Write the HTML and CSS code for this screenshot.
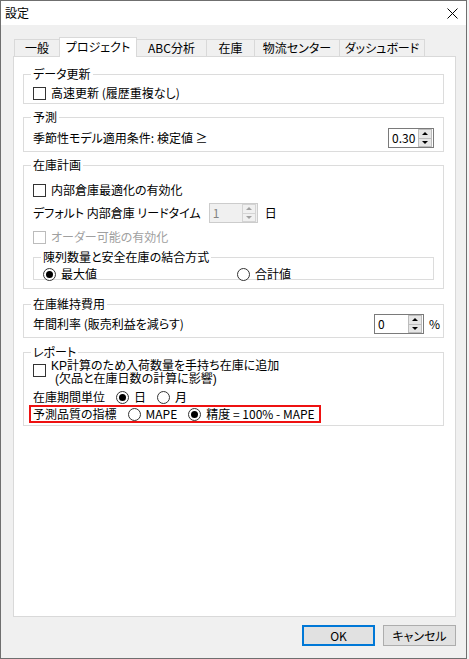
FILE: index.html
```html
<!DOCTYPE html>
<html lang="ja">
<head>
<meta charset="utf-8">
<title>設定</title>
<link rel="stylesheet" href="styles.css">
</head>
<body>
<div class="window">
  <div class="titlebar">
    <span class="title">設定</span>
    <svg class="close" width="11" height="11" viewBox="0 0 11 11"><path d="M0.5 0.5 L10.5 10.5 M10.5 0.5 L0.5 10.5" stroke="#000" stroke-width="1" fill="none"/></svg>
  </div>
  <div class="tabs">
    <div class="tab tab-general">一般</div>
    <div class="tab tab-project active">プロジェクト</div>
    <div class="tab tab-abc">ABC分析</div>
    <div class="tab tab-stock">在庫</div>
    <div class="tab tab-dist">物流センター</div>
    <div class="tab tab-dash">ダッシュボード</div>
  </div>
  <div class="panel">
    <div class="group g1">
      <div class="legend">データ更新</div>
      <div class="row row-g1"><span class="check"></span><span class="lbl">高速更新 (履歴重複なし)</span></div>
    </div>

    <div class="group g2">
      <div class="legend">予測</div>
      <div class="row row-spin row-g2">
        <span>季節性モデル適用条件: 検定値 ≥</span>
        <div class="spinner sp-season">
          <span class="val">0.30</span>
          <div class="spin-btns"><span class="spin-btn up"></span><span class="spin-btn down"></span></div>
        </div>
      </div>
    </div>

    <div class="group g3">
      <div class="legend">在庫計画</div>
      <div class="row row-g3a"><span class="check"></span><span class="lbl">内部倉庫最適化の有効化</span></div>
      <div class="row row-g3b">
        <span>デフォルト 内部倉庫 リードタイム</span>
        <div class="spinner sp-lead disabled">
          <span class="val">1</span>
          <div class="spin-btns"><span class="spin-btn up"></span><span class="spin-btn down"></span></div>
        </div>
        <span class="unit-day">日</span>
      </div>
      <div class="row row-g3c disabled-text"><span class="check disabled"></span><span class="lbl">オーダー可能の有効化</span></div>
      <div class="group inner">
        <div class="legend">陳列数量と安全在庫の結合方式</div>
        <div class="radio-grid">
          <div class="radio-item"><span class="radio checked"></span><span>最大値</span></div>
          <div class="radio-item"><span class="radio"></span><span>合計値</span></div>
        </div>
      </div>
    </div>

    <div class="group g4">
      <div class="legend">在庫維持費用</div>
      <div class="row row-spin row-g4">
        <span>年間利率 (販売利益を減らす)</span>
        <div class="spin-group">
          <div class="spinner sp-rate">
            <span class="val">0</span>
            <div class="spin-btns"><span class="spin-btn up"></span><span class="spin-btn down"></span></div>
          </div>
          <span class="pct">%</span>
        </div>
      </div>
    </div>

    <div class="group g5">
      <div class="legend">レポート</div>
      <div class="row-multi">
        <span class="check"></span>
        <div class="multi-text">
          <div>KP計算のため入荷数量を手持ち在庫に追加</div>
          <div class="indent">(欠品と在庫日数の計算に影響)</div>
        </div>
      </div>
      <div class="row row-unit">
        <span>在庫期間単位</span>
        <div class="radio-item gap"><span class="radio checked"></span><span>日</span></div>
        <div class="radio-item gap"><span class="radio"></span><span>月</span></div>
      </div>
      <div class="highlight">
        <span>予測品質の指標</span>
        <div class="radio-item gap"><span class="radio"></span><span>MAPE</span></div>
        <div class="radio-item gap"><span class="radio checked"></span><span>精度 = 100% - MAPE</span></div>
      </div>
    </div>
  </div>
  <div class="btn-row">
    <button class="btn default">OK</button>
    <button class="btn">キャンセル</button>
  </div>
</div>
</body>
</html>
```

FILE: styles.css
```css
* { box-sizing: border-box; }

body {
  margin: 0;
  background: #f4f4f4;
  font-family: "Noto Sans CJK JP", "Noto Sans", sans-serif;
  font-size: 12px;
  line-height: 16px;
  font-feature-settings: "palt";
  color: #000;
}

.window {
  width: 467px;
  height: 659px;
  border: 1px solid #6f6f6f;
  background: #f0f0f0;
  display: flex;
  flex-direction: column;
}

.titlebar {
  height: 24px;
  flex: none;
  background: #fff;
  display: flex;
  align-items: center;
  justify-content: space-between;
  padding: 0 8px 0 4px;
}

.close { display: block; margin-top: 1px; }

/* tabs */
.tabs {
  display: flex;
  align-items: flex-end;
  height: 19px;
  flex: none;
  margin: 12px 0 0 13px;
}

.tab {
  height: 17px;
  border: 1px solid #d9d9d9;
  border-bottom: none;
  margin-left: -1px;
  text-align: center;
  line-height: 16px;
  background: #f0f0f0;
}
.tab:first-child { margin-left: 0; }

.tab.active {
  height: 20px;
  line-height: 17px;
  background: #fff;
  margin-bottom: -1px;
  position: relative;
  z-index: 1;
}

.tab-general { width: 46px; }
.tab-project { width: 78px; }
.tab-abc { width: 71px; }
.tab-stock { width: 49px; }
.tab-dist { width: 86px; }
.tab-dash { width: 86px; }

/* panel */
.panel {
  flex: none;
  margin-left: 12px;
  width: 443px;
  height: 561px;
  border: 1px solid #d9d9d9;
  background: #fff;
  padding: 17px 11px 0 9px;
}

.group {
  border: 1px solid #dcdcdc;
  padding: 0 9px;
}

.legend {
  margin: -9px 0 0 -2px;
  padding: 0 2px;
  background: #fff;
  width: fit-content;
  height: 16px;
  line-height: 16px;
  white-space: nowrap;
}

.g1 { padding-bottom: 2px; }
.g2 { margin-top: 13px; padding-bottom: 3px; }
.g3 { margin-top: 13px; padding-bottom: 8px; }
.g4 { margin-top: 15px; padding-bottom: 3px; }
.g5 { margin-top: 14px; padding-bottom: 2px; }

.row {
  display: flex;
  align-items: center;
  white-space: nowrap;
}

.row-g1 { margin-top: 3px; height: 16px; }
.row-g2 { margin-top: 3px; height: 20px; justify-content: space-between; }
.row-g3a { margin-top: 9px; height: 16px; }
.row-g3b { margin-top: 5px; height: 20px; }
.row-g3c { margin-top: 6px; height: 16px; }
.row-g4 { margin-top: 2px; height: 20px; justify-content: space-between; }

.lbl { margin-left: 5px; }

.check {
  width: 13px;
  height: 13px;
  flex: none;
  border: 1px solid #333;
  background: #fff;
}
.check.disabled { border-color: #bcbcbc; }
.disabled-text { color: #a0a0a0; }

/* inner group */
.inner {
  margin-top: 12px;
  padding: 0 9px;
}
.radio-grid {
  margin-top: 1px;
  height: 13px;
  display: grid;
  grid-template-columns: 194px 1fr;
  align-items: center;
}

.radio-item {
  display: flex;
  align-items: center;
  gap: 5px;
  white-space: nowrap;
}
.radio-item.gap { margin-left: 11px; }

.radio {
  width: 13px;
  height: 13px;
  flex: none;
  border: 1px solid #333;
  border-radius: 50%;
  background: #fff;
  display: flex;
  align-items: center;
  justify-content: center;
}
.radio.checked::after {
  content: "";
  width: 7px;
  height: 7px;
  border-radius: 50%;
  background: #000;
}

/* spinners */
.spinner {
  height: 20px;
  border: 1px solid #7a7a7a;
  background: #fff;
  display: flex;
  align-items: stretch;
  flex: none;
}
.spinner .val {
  flex: 1;
  padding-left: 3px;
  line-height: 18px;
}
.spin-btns {
  width: 14px;
  margin-right: 1px;
  display: flex;
  flex-direction: column;
}
.spin-btn {
  flex: 1;
  background: #e6e6e6;
  border: 1px solid #bcbcbc;
  display: flex;
  align-items: center;
  justify-content: center;
}
.spin-btn.down { border-top: none; }
.spin-btn.up::after {
  content: "";
  border-left: 3px solid transparent;
  border-right: 3px solid transparent;
  border-bottom: 3px solid #000;
}
.spin-btn.down::after {
  content: "";
  border-left: 3px solid transparent;
  border-right: 3px solid transparent;
  border-top: 3px solid #000;
}

.sp-season { width: 46px; }
.sp-lead { width: 49px; margin-left: 8px; }
.sp-rate { width: 50px; }

.spinner.disabled {
  border-color: #cccccc;
  background: #f0f0f0;
  color: #838383;
}
.spinner.disabled .spin-btn {
  background: #f0f0f0;
  border-color: #d4d4d4;
}
.spinner.disabled .spin-btn.up::after { border-bottom-color: #a0a0a0; }
.spinner.disabled .spin-btn.down::after { border-top-color: #a0a0a0; }

.unit-day { margin-left: 7px; }

.spin-group {
  display: flex;
  align-items: center;
  margin-right: -6px;
}
.pct { margin-left: 5px; }

/* report */
.row-multi {
  display: flex;
  align-items: flex-start;
  white-space: nowrap;
}
.row-multi .check { margin-top: 4px; }
.multi-text {
  margin-left: 5px;
  font-family: "Liberation Sans", "Noto Sans CJK JP", sans-serif;
  line-height: 13px;
}
.indent { padding-left: 4px; }

.row-unit { margin-top: 3px; height: 16px; }

.highlight {
  display: flex;
  align-items: center;
  width: fit-content;
  height: 18px;
  margin-left: -4px;
  padding: 0 4px 0 2px;
  border: 2px solid #ee1111;
  white-space: nowrap;
}

/* buttons */
.btn-row {
  display: flex;
  justify-content: flex-end;
  gap: 8px;
  margin-top: 8px;
  padding-right: 10px;
}
.btn {
  appearance: none;
  width: 73px;
  height: 21px;
  padding: 0;
  margin: 0;
  border: 1px solid #adadad;
  background: #e1e1e1;
  font: inherit;
  font-feature-settings: "palt";
  color: #000;
  line-height: 16px;
}
.btn.default { border: 2px solid #0078d7; }
```
